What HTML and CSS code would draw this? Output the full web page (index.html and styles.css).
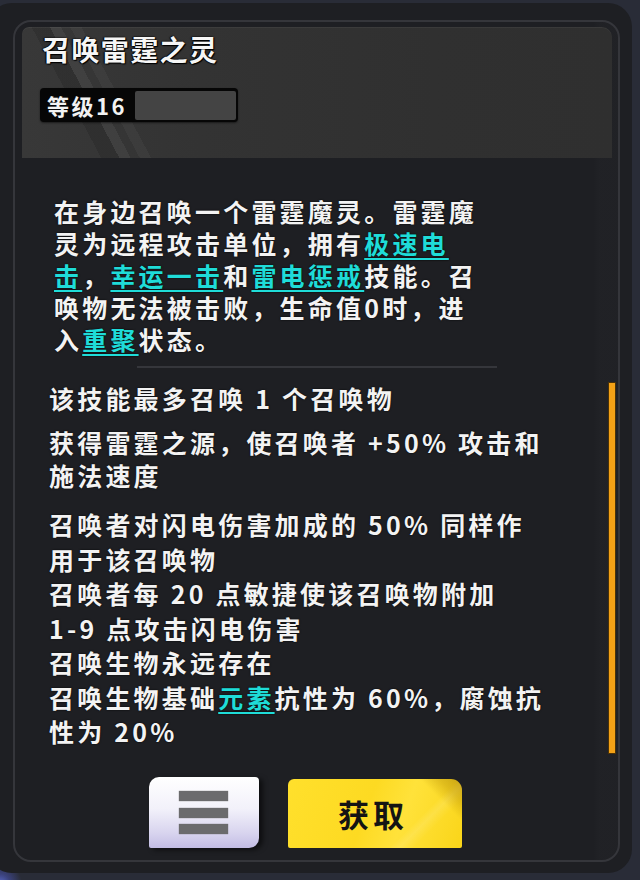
FILE: index.html
```html
<!DOCTYPE html>
<html lang="zh">
<head>
<meta charset="utf-8">
<link rel="stylesheet" href="styles.css">
</head>
<body>
<div class="panel">
  <div class="frame">
    <div class="header">
      <div class="title">召唤雷霆之灵</div>
      <div class="level"><span class="lv-text">等级16</span><span class="lv-bar"></span></div>
    </div>
    <div class="desc">在身边召唤一个雷霆魔灵。雷霆魔<br>灵为远程攻击单位，拥有<span class="kw">极速电<br>击</span>，<span class="kw">幸运一击</span>和<span class="kw">雷电惩戒</span>技能。召<br>唤物无法被击败，生命值0时，进<br>入<span class="kw">重聚</span>状态。</div>
    <div class="sep"></div>
    <div class="scroll">
      <div class="list">
        <p class="p1">该技能最多召唤 1 个召唤物</p>
        <p class="p2">获得雷霆之源，使召唤者 +50% 攻击和<br>施法速度</p>
        <p class="p3">召唤者对闪电伤害加成的 50% 同样作<br>用于该召唤物<br>召唤者每 20 点敏捷使该召唤物附加<br>1-9 点攻击闪电伤害<br>召唤生物永远存在<br>召唤生物基础<span class="kw">元素</span>抗性为 60%，腐蚀抗<br>性为 20%</p>
      </div>
      <div class="bar"></div>
    </div>
    <div class="actions">
      <div class="btn-menu"><span></span><span></span><span></span></div>
      <div class="btn-get">获取</div>
    </div>
  </div>
</div>
</body>
</html>
```
FILE: styles.css
```css
html, body {
  margin: 0;
  padding: 0;
}
body {
  width: 640px;
  height: 880px;
  overflow: hidden;
  background:
    radial-gradient(circle at 0 884px, #5b69c8 0, rgba(70,80,170,0.6) 10px, transparent 22px),
    #292c37;
  font-family: "Noto Sans CJK SC", "Noto Sans", sans-serif;
  color: #f3f3f3;
}
.panel {
  margin: 3px 0 0 -12px;
  width: 644px;
  height: 870px;
  box-sizing: border-box;
  background: #1e1f23;
  border-radius: 24px;
  padding: 17px 12px 11px 25px;
}
.frame {
  height: 100%;
  box-sizing: border-box;
  border: 2px solid #35363b;
  border-radius: 18px;
  display: flex;
  flex-direction: column;
  background: linear-gradient(90deg, transparent 0, transparent 578px, rgba(255,255,255,0.012) 584px);
}
.header {
  margin: 5px 6px 0 7px;
  height: 131px;
  box-sizing: border-box;
  border-radius: 7px 10px 0 0;
  padding: 5px 0 0 18px;
  background:
    linear-gradient(62deg, transparent 0, transparent 70px, rgba(0,0,0,0.12) 70px, rgba(0,0,0,0.12) 86px, rgba(255,255,255,0.05) 86px, rgba(255,255,255,0.05) 96px, transparent 96px, transparent 104px, rgba(255,255,255,0.035) 104px, rgba(255,255,255,0.035) 114px, transparent 114px),
    linear-gradient(90deg, #383838 0, #333333 30%, #303030 70%, #2f2f2f 100%);
  box-shadow: inset 0 1px 0 rgba(255,255,255,0.05);
}
.title {
  margin-left: 2px;
  font-size: 28px;
  line-height: 35px;
  font-weight: 700;
  letter-spacing: 1.4px;
  color: #f6f6f6;
  text-shadow: 0 0 2px #000, 1px 1px 1px #000, -1px 0 1px #000;
}
.level {
  margin-top: 21px;
  width: 198px;
  height: 34px;
  box-sizing: border-box;
  background: #060606;
  border-radius: 4px;
  display: flex;
  align-items: stretch;
  padding: 3px 2px 2px 0;
  box-shadow: 0 1px 2px rgba(0,0,0,0.5);
}
.lv-text {
  width: 95px;
  box-sizing: border-box;
  padding-left: 7px;
  font-size: 22px;
  line-height: 28px;
  font-weight: 700;
  letter-spacing: 2.5px;
  color: #f2f2f2;
}
.lv-bar {
  flex: 1;
  background: #444444;
  border-radius: 2px;
}
.desc {
  margin-top: 37px;
  padding-left: 39px;
  font-size: 25px;
  line-height: 32px;
  letter-spacing: 3.2px;
  font-weight: 700;
  white-space: nowrap;
  text-shadow: 0 0 2px rgba(0,0,0,0.9);
}
.kw {
  color: #1fdcd8;
  text-decoration: underline;
  text-decoration-thickness: 2px;
  text-underline-offset: 4px;
}
.sep {
  width: 360px;
  height: 2px;
  margin: 11px auto 0;
  background: #35363b;
}
.scroll {
  display: flex;
  margin-top: 13px;
}
.list {
  flex: 1;
  padding-left: 34px;
  font-size: 25px;
  line-height: 34px;
  letter-spacing: 3.2px;
  font-weight: 700;
  white-space: nowrap;
  text-shadow: 0 0 2px rgba(0,0,0,0.9);
}
.list p {
  margin: 0;
}
.list .p2 {
  margin-top: 11px;
  line-height: 33px;
}
.list .p3 {
  margin-top: 15px;
  line-height: 34.5px;
}
.bar {
  width: 6px;
  height: 370px;
  margin: 2px 3px 0 0;
  background: #f3a116;
  box-shadow: 0 0 0 1px #4a3208;
}
.actions {
  margin-top: auto;
  margin-bottom: 12px;
  display: flex;
  justify-content: center;
  align-items: flex-end;
  gap: 29px;
  padding-right: 22px;
}
.btn-menu {
  width: 110px;
  height: 71px;
  box-sizing: border-box;
  border-radius: 10px 4px 10px 2px;
  background: linear-gradient(180deg, #ffffff 0, #f2f1fa 45%, #d7d3ee 80%, #c2bce4 100%);
  box-shadow: 4px 2px 5px rgba(0,0,0,0.55);
  display: flex;
  flex-direction: column;
  align-items: center;
  justify-content: center;
  gap: 6.5px;
  padding-right: 2px;
}
.btn-menu span {
  width: 49px;
  height: 10px;
  background: #6b6b6d;
  box-shadow: 0 0 1px #6b6b6d;
}
.btn-get {
  width: 174px;
  height: 69px;
  box-sizing: border-box;
  border-radius: 6px 11px 2px 2px;
  background:
    linear-gradient(225deg, rgba(150,110,0,0.5) 0, rgba(170,130,0,0.35) 16px, transparent 30px),
    linear-gradient(135deg, transparent 0, transparent 70%, rgba(255,255,255,0.12) 74%, transparent 80%),
    linear-gradient(110deg, #ffe02c 0, #fdda22 45%, #ffe23a 65%, #fad519 100%);
  display: flex;
  align-items: center;
  justify-content: center;
  font-size: 31px;
  font-weight: 700;
  letter-spacing: 4px;
  color: #141414;
  padding-right: 4px;
}
```
